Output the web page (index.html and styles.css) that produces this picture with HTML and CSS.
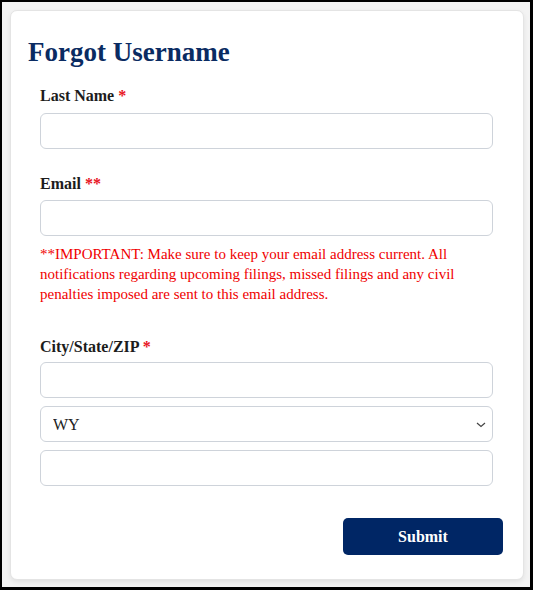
FILE: index.html
```html
<!DOCTYPE html>
<html>
<head>
<meta charset="utf-8">
<link rel="stylesheet" href="styles.css">
</head>
<body>
<div class="frame">
  <div class="card">
    <h1 class="title">Forgot Username</h1>
    <form class="form">
      <div class="group">
        <label class="label">Last Name <span class="req">*</span></label>
        <input class="input" type="text">
      </div>
      <div class="group">
        <label class="label label-email">Email <span class="req">**</span></label>
        <input class="input" type="text">
        <p class="note">**IMPORTANT: Make sure to keep your email address current. All notifications regarding upcoming filings, missed filings and any civil penalties imposed are sent to this email address.</p>
      </div>
      <div class="group group-city">
        <label class="label label-city">City/State/ZIP <span class="req">*</span></label>
        <div class="stack">
          <input class="input" type="text">
          <div class="select-wrap">
            <select class="input select"><option>WY</option></select>
            <svg class="chev" width="10" height="6" viewBox="0 0 10 6"><path d="M1 1 L5 4.5 L9 1" fill="none" stroke="#444" stroke-width="1.2"/></svg>
          </div>
          <input class="input" type="text">
        </div>
      </div>
      <div class="actions">
        <button class="btn" type="button">Submit</button>
      </div>
    </form>
  </div>
</div>
</body>
</html>
```
FILE: styles.css
```css
html { background: #000; }
body { margin: 0; }
.frame {
  margin: 2px 3px 3px 2px;
  height: 585px;
  box-sizing: border-box;
  background: #f3f3f3;
  padding: 8px 6px 7px 8px;
}
.card {
  height: 100%;
  box-sizing: border-box;
  background: #fff;
  border: 1px solid #e4e4e4;
  border-radius: 7px;
  box-shadow: 0 2px 5px rgba(0,0,0,0.08);
  padding: 26px 20px 0 17px;
}
.title {
  margin: 0;
  font-family: "Liberation Serif", serif;
  font-weight: bold;
  font-size: 27px;
  line-height: 30px;
  color: #0a2b62;
}
.form { padding: 0 10px 0 12px; margin-top: 19px; }
.group { display: flex; flex-direction: column; }
.group + .group { margin-top: 25px; }
.group-city { margin-top: 33px !important; }
.label {
  font-family: "Liberation Serif", serif;
  font-weight: bold;
  font-size: 16px;
  line-height: 20px;
  color: #1c1c1c;
  margin-bottom: 7px;
}
.label-email { margin-bottom: 6px; }
.label-city { margin-bottom: 5px; }
.req { color: #e8141e; }
.input {
  display: block;
  width: 100%;
  height: 36px;
  box-sizing: border-box;
  border: 1px solid #ced3da;
  border-radius: 6px;
  background: #fff;
  font-family: "Liberation Serif", serif;
  font-size: 16px;
  padding: 0 12px;
  margin: 0;
  color: #222;
}
.stack { display: flex; flex-direction: column; gap: 8px; }
.select-wrap { position: relative; }
.select { appearance: none; -webkit-appearance: none; outline: none; }
.chev { position: absolute; right: 7px; top: 16px; }
.note {
  margin: 8px 0 0;
  font-family: "Liberation Serif", serif;
  font-size: 15px;
  line-height: 20px;
  color: #f00000;
}
.actions { display: flex; justify-content: flex-end; margin: 32px -10px 0 0; }
.btn {
  width: 160px;
  height: 37px;
  border: none;
  border-radius: 5px;
  background: #002665;
  color: #fff;
  font-family: "Liberation Serif", serif;
  font-weight: bold;
  font-size: 16px;
}
```
